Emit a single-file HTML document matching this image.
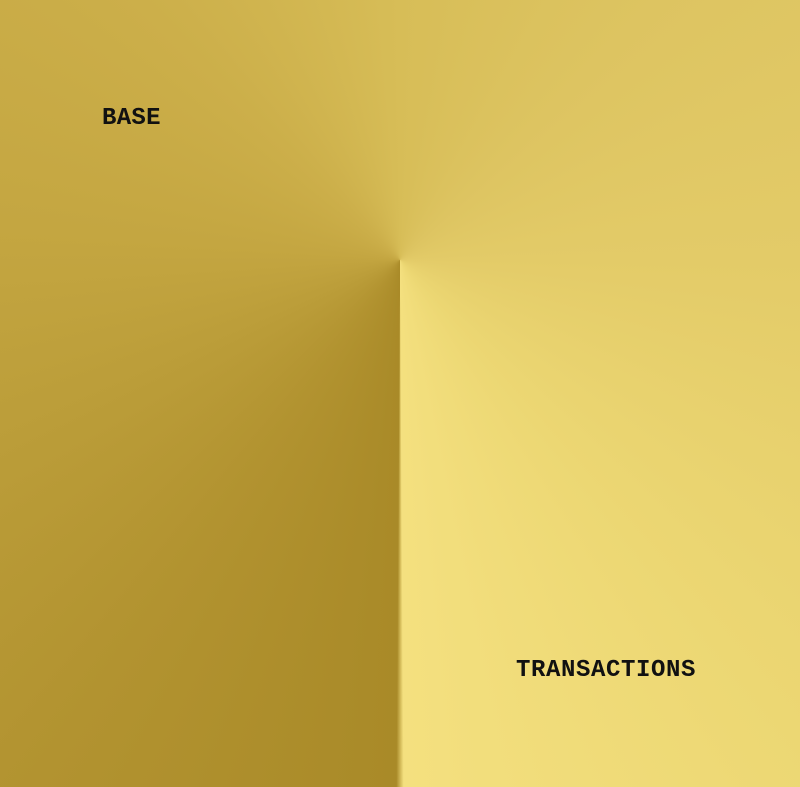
<!DOCTYPE html>
<html><head><meta charset="utf-8"><style>
html,body{margin:0;padding:0}
body{width:800px;height:787px;overflow:hidden;position:relative;
background:conic-gradient(from 0deg at 400px 260px,#d7bd57 0deg,#ddc461 45deg,#e3cb68 90deg,#ecd773 140deg,#f4e07f 179.6deg,#a98a28 180.4deg,#b29330 215deg,#bb9d39 245deg,#c4a641 275deg,#ccaf4a 315deg,#d7bd57 360deg);}
.t{position:absolute;font-family:"Liberation Mono",monospace;font-weight:bold;font-size:24px;color:#111;letter-spacing:0.3px;line-height:1}
</style></head><body>
<div class="t" style="left:102px;top:107px">BASE</div>
<div class="t" style="left:516px;top:659px;letter-spacing:0.6px">TRANSACTIONS</div>
</body></html>
